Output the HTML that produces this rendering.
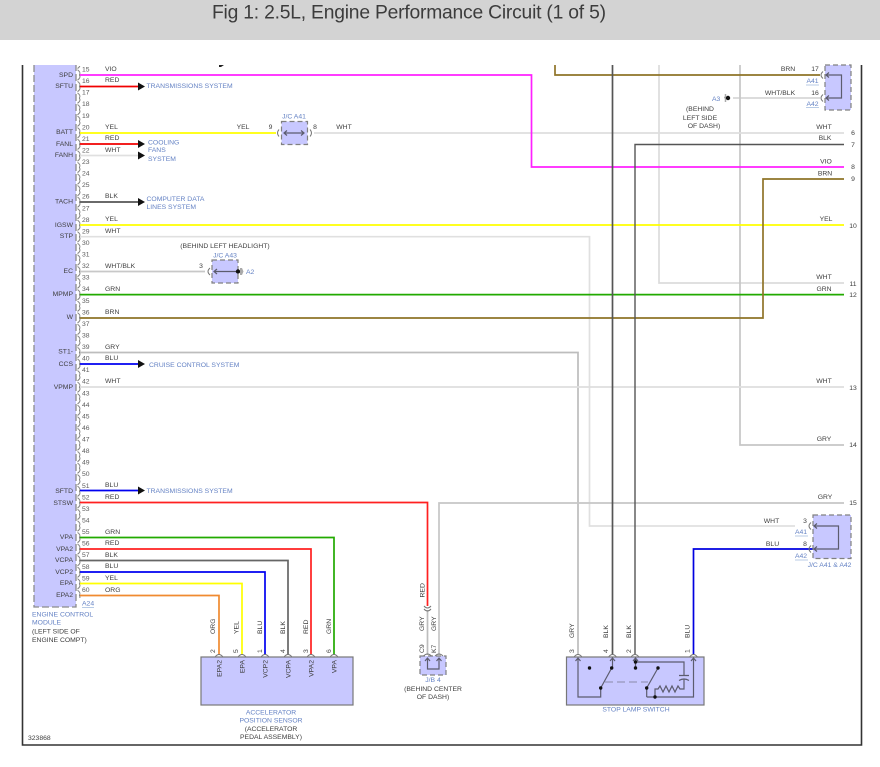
<!DOCTYPE html>
<html><head><meta charset="utf-8"><style>
html,body{margin:0;padding:0;background:#fff;width:880px;height:767px;overflow:hidden}
svg{display:block}
#d{filter:blur(.3px)}
text{font-family:"Liberation Sans",sans-serif;font-size:6.8px;fill:#3e3e3e}
.b{fill:#6482c4}.m{text-anchor:middle}.e{text-anchor:end}
.n text{fill:#5c5c5c}
.k{fill:none;stroke:#5c5c6e;stroke-width:1.2}
.c{fill:none;stroke:#777;stroke-width:1}
.bx{fill:#c8c8ff;stroke:#808080;stroke-width:1.2;stroke-dasharray:5 3}
.u{stroke:#b8cbe6;stroke-width:1}
.w{fill:none;stroke-width:1.7}
</style></head><body>
<svg width="880" height="767" viewBox="0 0 880 767" xmlns="http://www.w3.org/2000/svg">
<defs>
<pattern id="p" x="76" y="69.2" width="8" height="11.565" patternUnits="userSpaceOnUse">
<path d="M1.5 .6Q5.2 3 3.4 5.8Q5.2 8.4 1.5 10.9" fill="none" stroke="#777" stroke-width=".9"/>
</pattern>
</defs>
<rect x="0" y="0" width="880" height="40" fill="#d3d3d3"/>
<text x="212" y="18.500" style="font-size:19.300px;fill:#3c3c3c" textLength="394" lengthAdjust="spacing">Fig 1: 2.5L, Engine Performance Circuit (1 of 5)</text>

<g id="d">
<!-- frame -->
<path d="M22.500 65V745H861.500V65" fill="none" stroke="#333" stroke-width="1.600"/>
<path d="M219 65h5l-3 2h-2z" fill="#222"/>

<!-- ECM -->
<rect x="34" y="65" width="42" height="542" fill="#c8c8ff"/>
<path d="M34 65V607H76V65" fill="none" stroke="#8c8c8c" stroke-width="1.300" stroke-dasharray="7 3"/>
<rect x="76.500" y="66" width="8" height="532" fill="url(#p)"/>

<!-- long wires -->
<g class="w">
<path d="M659 65V283H844" stroke="#dcdcdc"/>
<path d="M740 65V445H844" stroke="#c6c6c6"/>
<path d="M80 133H276" stroke="#ffff00"/>
<path d="M314 133H844" stroke="#dedede"/>
<path d="M80 236.700H589.500V526H795" stroke="#e0e0e0"/>
<path d="M80 271.500H205" stroke="#c8c8c8"/>
<path d="M80 352.500H578V655" stroke="#bdbdbd"/>
<path d="M80 387H844" stroke="#dedede"/>
<path d="M439 655V503H844" stroke="#c6c6c6"/>
<path d="M427.500 610V655" stroke="#bdbdbd"/>
<path d="M733 98H820" stroke="#c8c8c8" stroke-width="1.300"/>
<path d="M80 75H531.500V167H844" stroke="#ff20ff"/>
<path d="M80 225H844" stroke="#ffff00"/>
<path d="M80 294.600H844" stroke="#22aa00"/>
<path d="M80 318H763V179H844" stroke="#8f7428"/>
<path d="M555 65V75H820" stroke="#8f7428"/>
<path d="M612.500 65V655" stroke="#555"/>
<path d="M635 655V144.500H844" stroke="#555" stroke-width="1.400"/>
<path d="M80 502.500H427.500V606" stroke="#ff2020"/>
<path d="M693.500 655V549H818" stroke="#0000e0"/>
<path d="M80 537.500H334V655" stroke="#22aa00"/>
<path d="M80 549H311V655" stroke="#ff2020"/>
<path d="M80 560.500H288V655" stroke="#666"/>
<path d="M80 572H265V655" stroke="#0000f0"/>
<path d="M80 583.500H242V655" stroke="#ffff00"/>
<path d="M80 595.500H219V655" stroke="#f08a30"/>
<path d="M80 86.500H139" stroke="#f00000"/>
<path d="M80 144H139" stroke="#f00000"/>
<path d="M80 155.500H139" stroke="#e0e0e0"/>
<path d="M80 202H139" stroke="#555"/>
<path d="M80 364H139" stroke="#0000f0"/>
<path d="M80 490.500H139" stroke="#0000f0"/>
</g>
<path d="M138 82.500l7 4-7 4zM138 140l7 4-7 4zM138 151.500l7 4-7 4zM138 198l7 4-7 4zM138 360l7 4-7 4zM138 486.500l7 4-7 4z" fill="#111"/>

<!-- ECM labels -->
<g>
<text x="73" y="77" class="e">SPD</text><text x="73" y="88" class="e">SFTU</text>
<text x="73" y="134" class="e">BATT</text><text x="73" y="146" class="e">FANL</text>
<text x="73" y="157" class="e">FANH</text><text x="73" y="203.500" class="e">TACH</text>
<text x="73" y="227" class="e">IGSW</text><text x="73" y="238" class="e">STP</text>
<text x="73" y="273" class="e">EC</text><text x="73" y="296" class="e">MPMP</text>
<text x="73" y="319" class="e">W</text><text x="73" y="353.500" class="e">ST1-</text>
<text x="73" y="366" class="e">CCS</text><text x="73" y="389" class="e">VPMP</text>
<text x="73" y="493" class="e">SFTD</text><text x="73" y="505" class="e">STSW</text>
<text x="73" y="539" class="e">VPA</text><text x="73" y="551" class="e">VPA2</text>
<text x="73" y="562" class="e">VCPA</text><text x="73" y="574" class="e">VCP2</text>
<text x="73" y="585" class="e">EPA</text><text x="73" y="597" class="e">EPA2</text>
</g>

<!-- pin numbers -->
<g class="n">
<text x="82" y="71.500">15</text><text x="82" y="83">16</text><text x="82" y="94.600">17</text><text x="82" y="106.200">18</text><text x="82" y="117.800">19</text><text x="82" y="129.300">20</text><text x="82" y="140.900">21</text><text x="82" y="152.500">22</text><text x="82" y="164">23</text><text x="82" y="175.600">24</text><text x="82" y="187.200">25</text><text x="82" y="198.700">26</text><text x="82" y="210.300">27</text><text x="82" y="221.800">28</text><text x="82" y="233.400">29</text><text x="82" y="245">30</text><text x="82" y="256.500">31</text><text x="82" y="268.100">32</text><text x="82" y="279.700">33</text><text x="82" y="291.200">34</text><text x="82" y="302.800">35</text><text x="82" y="314.400">36</text><text x="82" y="325.900">37</text><text x="82" y="337.500">38</text><text x="82" y="349">39</text><text x="82" y="360.600">40</text><text x="82" y="372.200">41</text><text x="82" y="383.700">42</text><text x="82" y="395.300">43</text><text x="82" y="406.900">44</text><text x="82" y="418.400">45</text><text x="82" y="430">46</text><text x="82" y="441.600">47</text><text x="82" y="453.100">48</text><text x="82" y="464.700">49</text><text x="82" y="476.200">50</text><text x="82" y="487.800">51</text><text x="82" y="499.400">52</text><text x="82" y="510.900">53</text><text x="82" y="522.500">54</text><text x="82" y="534.100">55</text><text x="82" y="545.600">56</text><text x="82" y="557.200">57</text><text x="82" y="568.800">58</text><text x="82" y="580.300">59</text><text x="82" y="591.900">60</text>
</g>

<!-- wire colour labels -->
<text x="105" y="71">VIO</text><text x="105" y="82">RED</text><text x="105" y="129">YEL</text>
<text x="105" y="140">RED</text><text x="105" y="152">WHT</text><text x="105" y="198">BLK</text>
<text x="105" y="221">YEL</text><text x="105" y="233">WHT</text><text x="105" y="268">WHT/BLK</text>
<text x="105" y="291">GRN</text><text x="105" y="314">BRN</text><text x="105" y="349">GRY</text>
<text x="105" y="360">BLU</text><text x="105" y="383">WHT</text><text x="105" y="487">BLU</text>
<text x="105" y="499">RED</text><text x="105" y="534">GRN</text><text x="105" y="545">RED</text>
<text x="105" y="557">BLK</text><text x="105" y="568">BLU</text><text x="105" y="580">YEL</text>
<text x="105" y="592">ORG</text>

<!-- system labels -->
<text class="b" x="146.500" y="88">TRANSMISSIONS SYSTEM</text>
<text class="b" x="148" y="144.500">COOLING</text><text class="b" x="148" y="152">FANS</text><text class="b" x="148" y="161">SYSTEM</text>
<text class="b" x="146.500" y="201">COMPUTER DATA</text><text class="b" x="146.500" y="209">LINES SYSTEM</text>
<text class="b" x="149" y="367">CRUISE CONTROL SYSTEM</text>
<text class="b" x="146.500" y="493">TRANSMISSIONS SYSTEM</text>

<text class="b" x="32" y="616.500">ENGINE CONTROL</text><text class="b" x="32" y="624.500">MODULE</text>
<text x="32" y="633.500">(LEFT SIDE OF</text><text x="32" y="642">ENGINE COMPT)</text>
<text class="b" x="82" y="605.500">A24</text><path class="u" d="M82 607.500H94"/>
<text x="28" y="740">323868</text>

<!-- J/C A41 -->
<rect class="bx" x="281.500" y="121.500" width="26" height="23"/>
<path class="k" d="M284 133H304M287 130.500L284 133L287 135.500M301 130.500L304 133L301 135.500"/>
<path class="c" d="M279 129.500Q276 133 279 136.500M310 129.500Q313 133 310 136.500"/>
<text x="294" y="118.500" class="b m">J/C A41</text><text x="243" y="129" class="m">YEL</text>
<text x="270.500" y="129" class="m">9</text><text x="315" y="129" class="m">8</text><text x="344" y="129" class="m">WHT</text>

<!-- J/C A43 -->
<text x="225" y="248" class="m">(BEHIND LEFT HEADLIGHT)</text>
<rect class="bx" x="212" y="260" width="26" height="23"/>
<path class="k" d="M214 271.500H238M217 269L214 271.500L217 274"/>
<circle cx="238" cy="271.500" r="2.200" fill="#111"/>
<path d="M240 268h2l1.500 3.500-1.500 3.500h-2z" fill="#aaa"/>
<path class="c" d="M210 268Q206 271.500 210 275"/>
<text x="225" y="257.500" class="b m">J/C A43</text><text x="201" y="268" class="m">3</text><text x="246" y="274" class="b">A2</text>

<!-- Top right -->
<rect class="bx" x="825" y="65" width="26" height="45"/>
<path class="k" d="M826 75H841.500V98H826M829 72.500L826 75L829 77.500M829 95.500L826 98L829 100.500"/>
<path class="c" d="M823 71.500Q819 75 823 78.500M823 94.500Q819 98 823 101.500"/>
<text x="815" y="71" class="m">17</text><text x="815" y="95" class="m">16</text>
<text x="812.500" y="83" class="b m">A41</text><path class="u" d="M806 85H819"/>
<text x="812.500" y="106" class="b m">A42</text><path class="u" d="M806 107.500H819"/>
<text x="788" y="71" class="m">BRN</text><text x="780" y="95" class="m">WHT/BLK</text>
<text x="712" y="101" class="b">A3</text>
<path d="M724 97.500h2M725.500 94v8" stroke="#aaa" stroke-width="1.500"/>
<circle cx="728" cy="98" r="2.200" fill="#111"/>
<text x="700" y="111" class="m">(BEHIND</text><text x="700" y="120" class="m">LEFT SIDE</text><text x="704" y="128" class="m">OF DASH)</text>

<!-- right labels -->
<text x="824" y="129" class="m">WHT</text><text x="825" y="140" class="m">BLK</text><text x="826" y="163.500" class="m">VIO</text>
<text x="825" y="175.500" class="m">BRN</text><text x="826" y="221" class="m">YEL</text><text x="824" y="279" class="m">WHT</text>
<text x="824" y="291" class="m">GRN</text><text x="824" y="383" class="m">WHT</text><text x="824" y="441" class="m">GRY</text>
<text x="825" y="499" class="m">GRY</text>
<text x="853" y="135" class="m">6</text><text x="853" y="147" class="m">7</text><text x="853" y="169" class="m">8</text>
<text x="853" y="181" class="m">9</text><text x="853" y="228" class="m">10</text><text x="853" y="286" class="m">11</text>
<text x="853" y="297" class="m">12</text><text x="853" y="390" class="m">13</text><text x="853" y="447" class="m">14</text>
<text x="853" y="505" class="m">15</text>

<!-- bottom right -->
<rect class="bx" x="813" y="515" width="38" height="43.500"/>
<path class="k" d="M814 526H838.500V549H814M817 523.500L814 526L817 528.500M817 546.500L814 549L817 551.500"/>
<path class="c" d="M811 522.500Q807 526 811 529.500M811 545.500Q807 549 811 552.500"/>
<text x="805" y="523" class="m">3</text><text x="805" y="546" class="m">8</text>
<text x="801" y="534" class="b m">A41</text><path class="u" d="M795 536H808"/>
<text x="801" y="558" class="b m">A42</text><path class="u" d="M795 560H808"/>
<text x="771.500" y="523" class="m">WHT</text><text x="772.500" y="546" class="m">BLU</text>
<text x="829.500" y="567" class="b m">J/C A41 &amp; A42</text>

<!-- Accelerator sensor -->
<rect x="201" y="657" width="152" height="48" fill="#c8c8ff" stroke="#777" stroke-width="1.200"/>
<path class="c" d="M215 657Q219 652 223 657M238 657Q242 652 246 657M261 657Q265 652 269 657M284 657Q288 652 292 657M307 657Q311 652 315 657M330 657Q334 652 338 657"/>
<text transform="translate(215,634) rotate(-90)">ORG</text><text transform="translate(238.500,634) rotate(-90)">YEL</text>
<text transform="translate(262,634) rotate(-90)">BLU</text><text transform="translate(285,634) rotate(-90)">BLK</text>
<text transform="translate(308,634) rotate(-90)">RED</text><text transform="translate(331,634) rotate(-90)">GRN</text>
<text transform="translate(215,653) rotate(-90)">2</text><text transform="translate(238,653) rotate(-90)">5</text>
<text transform="translate(262,653) rotate(-90)">1</text><text transform="translate(285,653) rotate(-90)">4</text>
<text transform="translate(308,653) rotate(-90)">3</text><text transform="translate(331,653) rotate(-90)">6</text>
<text transform="translate(221.500,660) rotate(-90)" class="e">EPA2</text><text transform="translate(244.500,660) rotate(-90)" class="e">EPA</text>
<text transform="translate(267.500,660) rotate(-90)" class="e">VCP2</text><text transform="translate(290.500,660) rotate(-90)" class="e">VCPA</text>
<text transform="translate(313.500,660) rotate(-90)" class="e">VPA2</text><text transform="translate(336.500,660) rotate(-90)" class="e">VPA</text>
<text x="271" y="714.500" class="b m">ACCELERATOR</text><text x="271" y="722.500" class="b m">POSITION SENSOR</text>
<text x="271" y="731" class="m">(ACCELERATOR</text><text x="271" y="739" class="m">PEDAL ASSEMBLY)</text>

<!-- J/B 4 -->
<path class="c" d="M424 606Q427.500 610 431 606M424 609Q427.500 613 431 609"/>
<text transform="translate(424.500,597.500) rotate(-90)">RED</text>
<text transform="translate(424,631) rotate(-90)">GRY</text><text transform="translate(436,631) rotate(-90)">GRY</text>
<text transform="translate(424,653) rotate(-90)">C9</text><text transform="translate(436,653) rotate(-90)">K7</text>
<rect class="bx" x="420" y="656" width="26" height="19"/>
<path class="k" d="M427.500 658V669H439V658M425 661L427.500 658L430 661M436.500 661L439 658L441.500 661"/>
<path class="c" d="M423.500 656Q427.500 652 431.500 656M435 656Q439 652 443 656"/>
<text x="433" y="682" class="b m">J/B 4</text><text x="433" y="691" class="m">(BEHIND CENTER</text><text x="433" y="699" class="m">OF DASH)</text>

<!-- Stop lamp switch -->
<rect x="566.500" y="657" width="137.500" height="48" fill="#c8c8ff" stroke="#777" stroke-width="1.200"/>
<path class="c" d="M574 657Q578 652 582 657M608.500 657Q612.500 652 616.500 657M631 657Q635 652 639 657M689.500 657Q693.500 652 697.500 657"/>
<path class="k" d="M578 658V697H600.700V688L611.700 668M612.500 658V668M635.500 658V668M635.500 662H684V675M679 675.500H689M684 679.500V689H680L678 686L675 692L672 686L669 692L666 686L663 692L660 686L658 689H655V697M679 680.500Q684 677.500 689 680.500M646.700 697V688L658 668M646.700 697H693.500V658M575.500 661L578 658L580.500 661M610 661L612.500 658L615 661M633 661L635.500 658L638 661M691 661L693.500 658L696 661"/>
<path d="M605 682H648" stroke="#8a8aa8" stroke-width="1" stroke-dasharray="8 4" fill="none"/>
<g fill="#111"><circle cx="589.500" cy="668" r="1.700"/><circle cx="600.700" cy="688" r="1.700"/><circle cx="611.700" cy="668" r="1.700"/><circle cx="635.500" cy="662" r="1.700"/><circle cx="635.500" cy="668" r="1.700"/><circle cx="658" cy="668" r="1.700"/><circle cx="646.700" cy="688" r="1.700"/><circle cx="655" cy="697" r="1.700"/></g>
<text transform="translate(574,638) rotate(-90)">GRY</text><text transform="translate(608,638) rotate(-90)">BLK</text>
<text transform="translate(631,638) rotate(-90)">BLK</text><text transform="translate(689.500,638) rotate(-90)">BLU</text>
<text transform="translate(574,653) rotate(-90)">3</text><text transform="translate(608,653) rotate(-90)">4</text>
<text transform="translate(631,653) rotate(-90)">2</text><text transform="translate(689.500,653) rotate(-90)">1</text>
<text x="636" y="711.500" class="b m">STOP LAMP SWITCH</text>
</g>
</svg>
</body></html>
